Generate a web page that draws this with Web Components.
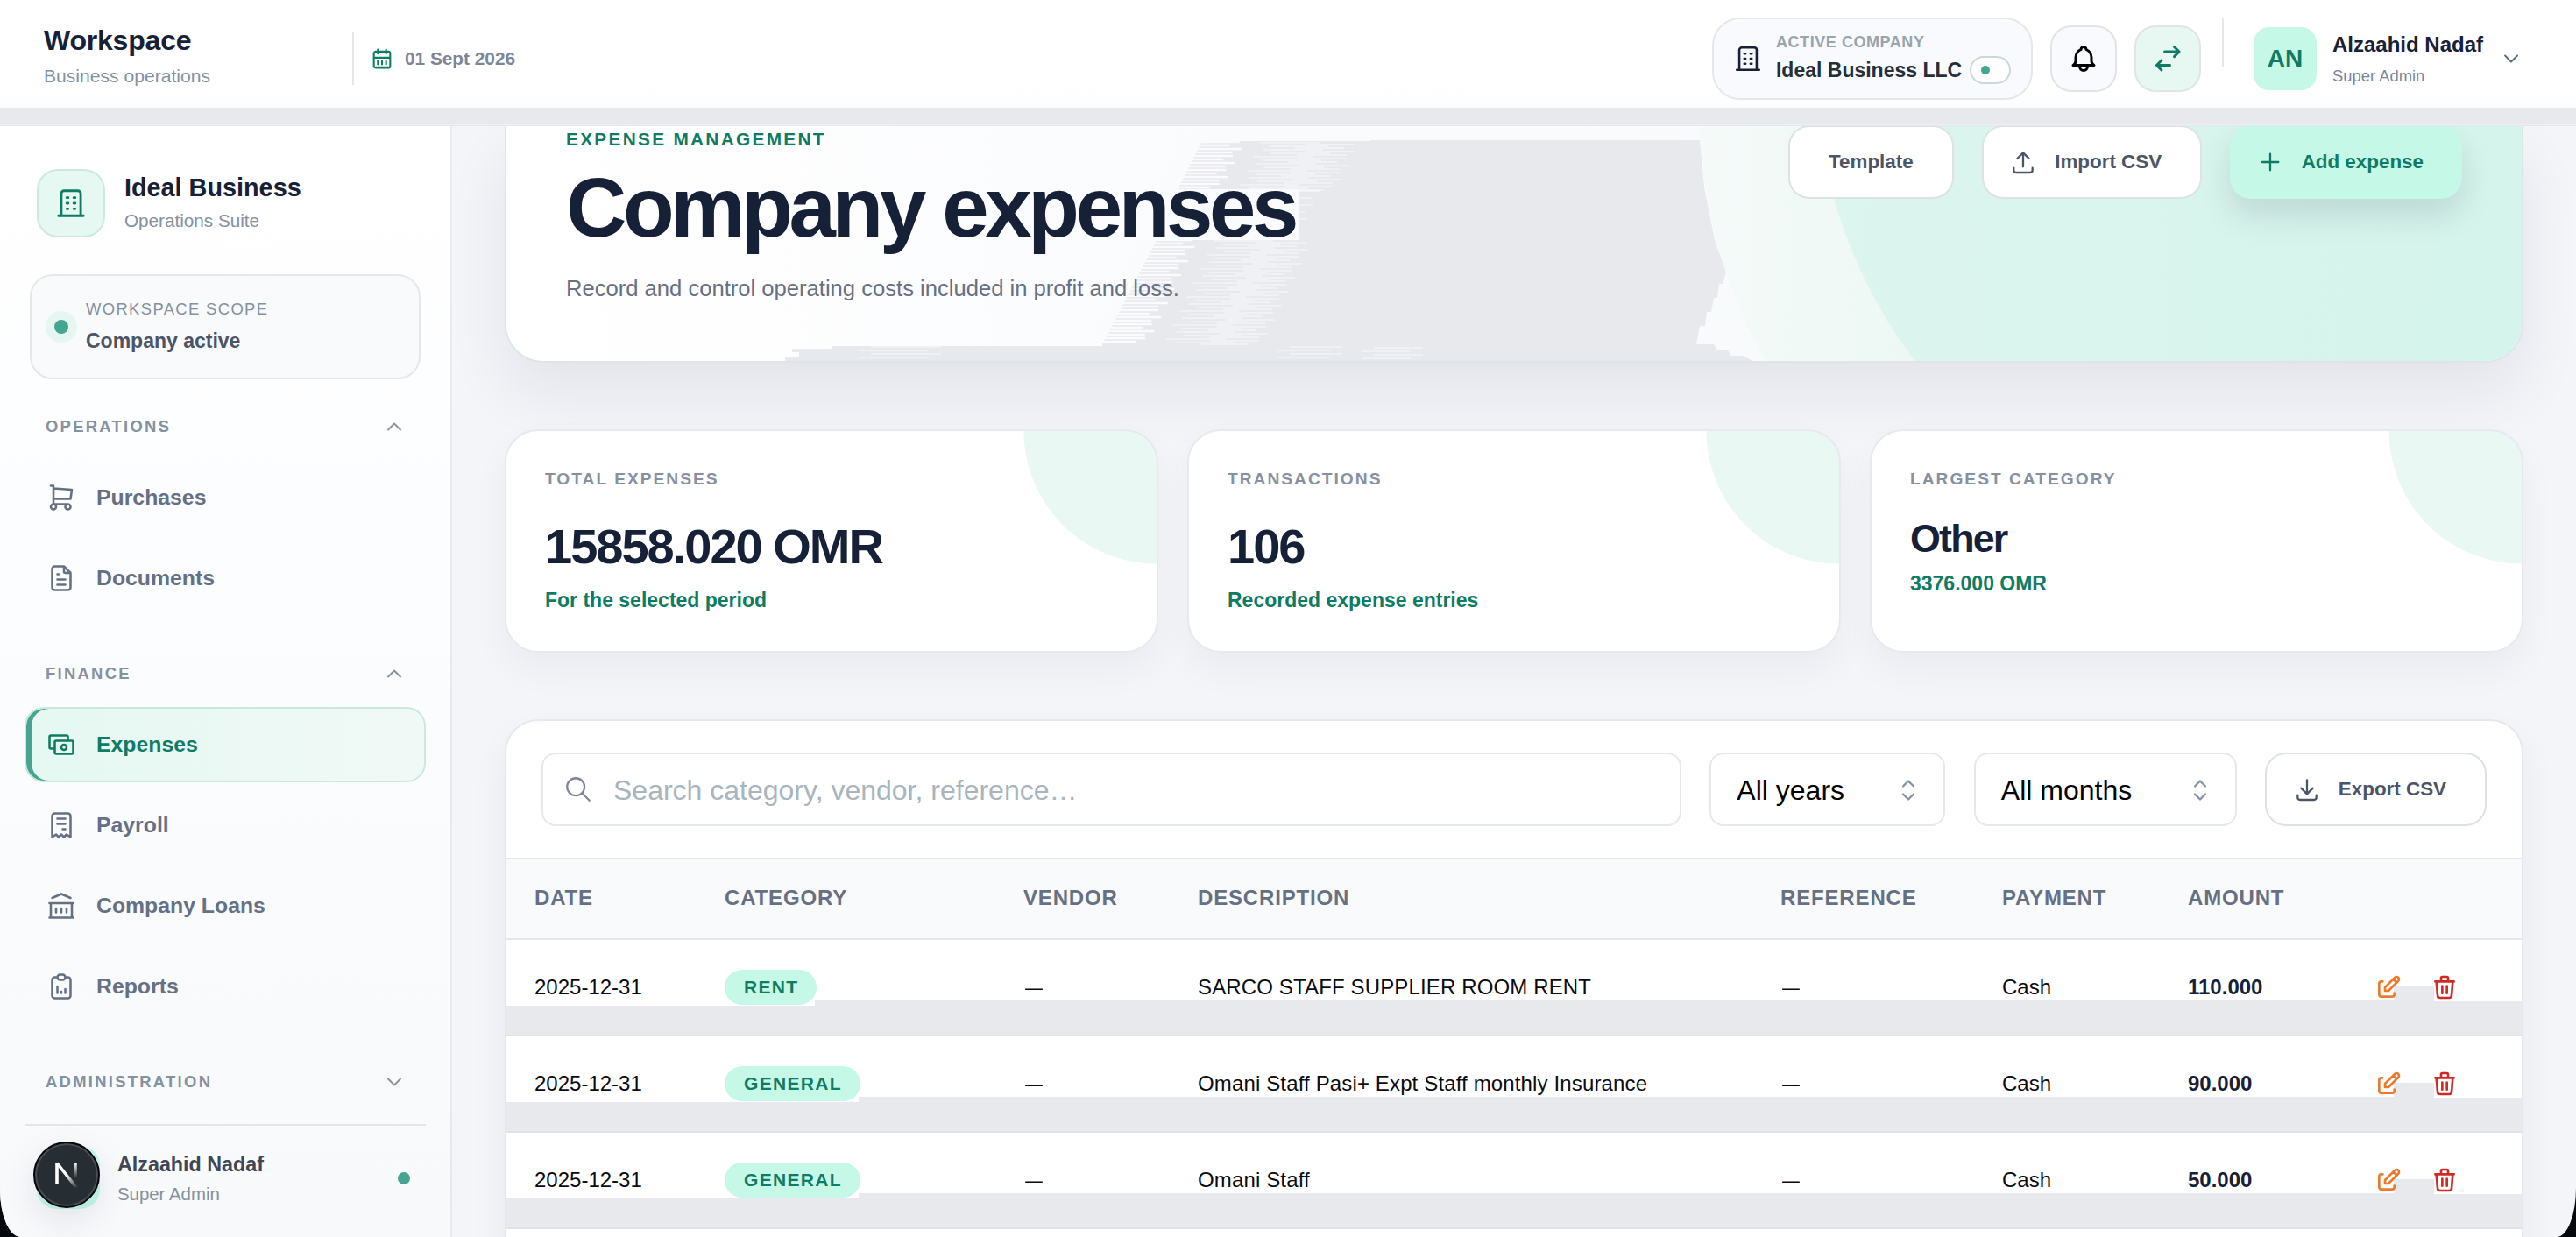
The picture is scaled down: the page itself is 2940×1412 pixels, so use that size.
<!DOCTYPE html>
<html lang="en">
<head>
<meta charset="utf-8">
<title>Company expenses</title>
<style>
  html, body {
    margin: 0;
    height: 100%;
    background: #05080c;
    overflow: hidden;
  }

  body {
    font-family: "Liberation Sans", Arial, sans-serif;
    color: #162037;
  }
</style>
</head>
<body>
<expense-app></expense-app>

<script>
const icons = {
  building: '<path d="M3 21h18M9 8h1M9 12h1M9 16h1M14 8h1M14 12h1M14 16h1M5 21v-16a2 2 0 0 1 2 -2h10a2 2 0 0 1 2 2v16"/>',
  calendar: '<path d="M4 7a2 2 0 0 1 2 -2h12a2 2 0 0 1 2 2v12a2 2 0 0 1 -2 2h-12a2 2 0 0 1 -2 -2zM16 3v4M8 3v4M4 11h16M8 14.5v3M12 14.5v3M16 14.5v3M6 20.5h12"/>',
  bell: '<path d="M10 5a2 2 0 1 1 4 0a7 7 0 0 1 4 6v3a4 4 0 0 0 2 3h-16a4 4 0 0 0 2 -3v-3a7 7 0 0 1 4 -6M9 17v1a3 3 0 0 0 6 0v-1"/>',
  swap: '<path d="M9.7 6.7h11M17 3l3.7 3.7l-3.7 3.7M13.7 17h-10M7.3 13.3l-3.7 3.7l3.7 3.7"/>',
  down: '<path d="M6 9l6 6l6 -6"/>',
  up: '<path d="M6 15l6 -6l6 6"/>',
  selector: '<path d="M8 9l4 -4l4 4M16 15l-4 4l-4 -4"/>',
  cart: '<path d="M4 19a2 2 0 1 0 4 0a2 2 0 1 0 -4 0M15 19a2 2 0 1 0 4 0a2 2 0 1 0 -4 0M17 17h-11v-14h-2M6 5l14 1l-1 7h-13"/>',
  file: '<path d="M14 3v4a1 1 0 0 0 1 1h4M17 21h-10a2 2 0 0 1 -2 -2v-14a2 2 0 0 1 2 -2h7l5 5v11a2 2 0 0 1 -2 2M9 9h1M9 13h6M9 17h6"/>',
  cash: '<path d="M7 15h-3a1 1 0 0 1 -1 -1v-8a1 1 0 0 1 1 -1h12a1 1 0 0 1 1 1v3M7 10a1 1 0 0 1 1 -1h12a1 1 0 0 1 1 1v8a1 1 0 0 1 -1 1h-12a1 1 0 0 1 -1 -1zM12 14a2 2 0 1 0 4 0a2 2 0 0 0 -4 0"/>',
  receipt: '<path d="M5 21v-16a2 2 0 0 1 2 -2h10a2 2 0 0 1 2 2v16l-3 -2l-2 2l-2 -2l-2 2l-2 -2l-3 2M9 7h6M9 11h6M13 15h2"/>',
  bank: '<path d="M3 21h18M3 10h18M5 6l7 -3l7 3M4 10v11M20 10v11M8 14v3M12 14v3M16 14v3"/>',
  report: '<path d="M9 5h-2a2 2 0 0 0 -2 2v12a2 2 0 0 0 2 2h10a2 2 0 0 0 2 -2v-12a2 2 0 0 0 -2 -2h-2M9 5a2 2 0 0 1 2 -2h2a2 2 0 0 1 2 2a2 2 0 0 1 -2 2h-2a2 2 0 0 1 -2 -2zM9 17v-5M12 17v-1M15 17v-3"/>',
  upload: '<path d="M4 17v2a2 2 0 0 0 2 2h12a2 2 0 0 0 2 -2v-2M7 9l5 -5l5 5M12 4v12"/>',
  download: '<path d="M4 17v2a2 2 0 0 0 2 2h12a2 2 0 0 0 2 -2v-2M7 11l5 5l5 -5M12 4v12"/>',
  plus: '<path d="M12 5v14M5 12h14"/>',
  search: '<path d="M3 10a7 7 0 1 0 14 0a7 7 0 1 0 -14 0M21 21l-6 -6"/>',
  edit: '<path d="M7 7h-1a2 2 0 0 0 -2 2v9a2 2 0 0 0 2 2h9a2 2 0 0 0 2 -2v-1M20.385 6.585a2.1 2.1 0 0 0 -2.97 -2.97l-8.415 8.385v3h3l8.385 -8.415zM16 5l3 3"/>',
  trash: '<path d="M4 7h16M10 11v6M14 11v6M5 7l1 12a2 2 0 0 0 2 2h8a2 2 0 0 0 2 -2l1 -12M9 7v-3a1 1 0 0 1 1 -1h4a1 1 0 0 1 1 1v3"/>',
};

class AppIcon extends HTMLElement {
  connectedCallback() {
    const size = this.getAttribute('size') || 36;
    const stroke = this.getAttribute('stroke') || 1.7;
    this.attachShadow({ mode: 'open' }).innerHTML = `
      <style>
        :host { display: block; flex: none; width: ${size}px; height: ${size}px; }
        svg { display: block; fill: none; stroke: currentColor; stroke-linecap: round; stroke-linejoin: round; }
      </style>
      <svg width="${size}" height="${size}" viewBox="0 0 24 24" stroke-width="${stroke}">${icons[this.getAttribute('name')]}</svg>
    `;
  }
}

class UiButton extends HTMLElement {
  connectedCallback() {
    const icon = this.getAttribute('icon');
    this.attachShadow({ mode: 'open' }).innerHTML = `
      <style>
        :host {
          display: flex;
          box-sizing: border-box;
          flex: none;
          align-items: center;
          gap: 20px;
          height: 84px;
          padding: 0 44px 0 ${icon ? 29.5 : 44}px;
          border: 2px solid #dde2e5;
          border-radius: 24px;
          background: #fff;
          color: #4b5567;
          font-size: 22.4px;
          font-weight: 700;
          line-height: 30px;
          white-space: nowrap;
        }
        :host([primary]) {
          border: 0;
          background: #c6f8e8;
          color: #0f7b63;
          box-shadow: 0 18px 36px rgba(22, 32, 55, .13);
        }
      </style>
      ${icon ? `<app-icon name="${icon}" size="32" stroke="1.7"></app-icon>` : ''}
      <span><slot></slot></span>
    `;
  }
}

class AppHeader extends HTMLElement {
  connectedCallback() {
    this.attachShadow({ mode: 'open' }).innerHTML = `
      <style>
        :host {
          display: flex;
          box-sizing: border-box;
          flex: none;
          align-items: center;
          height: 144px;
          padding: 0 60px 10px 50px;
          background: linear-gradient(#fff 0 100px, #fcfdff 123px, #e8e9ed 123px 142px, #eff0f3 142px 143px, #e4e6ea 143px);
          white-space: nowrap;
        }
        .title { width: 352px; margin-top: -2px; }
        .title b { display: block; font-size: 32px; line-height: 40px; letter-spacing: -.2px; }
        .title span { display: block; font-size: 21.1px; line-height: 41px; color: #8591a3; }
        .date {
          display: flex;
          align-items: center;
          gap: 12px;
          height: 60px;
          padding-left: 18px;
          border-left: 2px solid #e5e7eb;
          color: #7b8799;
          font-size: 20.8px;
          font-weight: 700;
        }
        .date app-icon { color: #0f7b63; }
        .right { display: flex; align-items: center; margin-left: auto; }
        .company {
          display: flex;
          box-sizing: border-box;
          align-items: center;
          gap: 15px;
          width: 366px;
          height: 94px;
          padding: 0 0 5px 22px;
          border: 2px solid #e5e7eb;
          border-radius: 32px;
          background: #f9fafd;
        }
        .company app-icon { margin-top: 4px; }
        .company small { display: block; font-size: 18px; line-height: 31px; font-weight: 700; letter-spacing: .56px; color: #98a4ae; }
        .company div div { display: flex; align-items: center; gap: 9px; font-size: 23px; font-weight: 700; line-height: 32px; color: #262f38; }
        .toggle {
          display: flex;
          box-sizing: border-box;
          align-items: center;
          width: 47px;
          height: 32px;
          padding-left: 11px;
          border: 2px solid #cbd6d8;
          border-radius: 16px;
          background: #fff;
        }
        .toggle::before { content: ""; width: 10px; height: 10px; border-radius: 50%; background: #45a58e; }
        .square {
          display: grid;
          box-sizing: border-box;
          place-items: center;
          width: 76px;
          height: 76px;
          margin-left: 20px;
          border: 2px solid #e0e4e8;
          border-radius: 24px;
          background: #f9fafd;
          color: #000;
        }
        .square.mint { background: #e7f8f2; color: #0f7b63; }
        .rule { width: 2px; height: 56px; margin: -38px 34px 0 24px; background: #e5e7eb; }
        .avatar {
          display: grid;
          place-items: center;
          width: 72px;
          height: 72px;
          border-radius: 18px;
          background: #c6f8e8;
          color: #0f7b63;
          font-size: 28px;
          font-weight: 700;
        }
        .user { margin: 2px 18px 0 18px; }
        .user b { display: block; font-size: 24px; line-height: 37px; }
        .user span { display: block; font-size: 18.4px; line-height: 36px; color: #7b8799; }
      </style>
      <div class="title"><b>Workspace</b><span>Business operations</span></div>
      <div class="date"><app-icon name="calendar" size="28" stroke="1.8"></app-icon><span>01 Sept 2026</span></div>
      <div class="right">
        <div class="company">
          <app-icon name="building" size="34" stroke="1.8"></app-icon>
          <div><small>ACTIVE COMPANY</small><div><span>Ideal Business LLC</span><span class="toggle"></span></div></div>
        </div>
        <div class="square"><app-icon name="bell" stroke="2"></app-icon></div>
        <div class="square mint"><app-icon name="swap" stroke="2"></app-icon></div>
        <div class="rule"></div>
        <div class="avatar">AN</div>
        <div class="user"><b>Alzaahid Nadaf</b><span>Super Admin</span></div>
        <app-icon name="down" size="28" stroke="1.6" style="color:#5c6b7a"></app-icon>
      </div>
    `;
  }
}

class NavGroup extends HTMLElement {
  connectedCallback() {
    const closed = this.hasAttribute('closed');
    this.attachShadow({ mode: 'open' }).innerHTML = `
      <style>
        :host { display: block; }
        header {
          display: flex;
          align-items: center;
          justify-content: space-between;
          height: 50px;
          padding: 0 22px 0 24px;
          color: #8591a0;
          font-size: 18.4px;
          font-weight: 700;
          letter-spacing: 2.3px;
        }
        .items { display: flex; flex-direction: column; gap: 6px; padding-top: 13px; }
      </style>
      <header><span>${this.getAttribute('label')}</span><app-icon name="${closed ? 'down' : 'up'}" size="28" stroke="1.6"></app-icon></header>
      ${closed ? '' : '<div class="items"><slot></slot></div>'}
    `;
  }
}

class NavItem extends HTMLElement {
  connectedCallback() {
    this.attachShadow({ mode: 'open' }).innerHTML = `
      <style>
        :host {
          display: flex;
          box-sizing: border-box;
          align-items: center;
          gap: 22px;
          height: 86px;
          padding-left: 22px;
          border: 2px solid transparent;
          border-radius: 22px;
          color: #667085;
          font-size: 24.8px;
          font-weight: 700;
        }
        :host([active]) {
          border-color: #cbe8df;
          background: linear-gradient(90deg, #e5f8f2, #f1f9f6);
          box-shadow: inset 6px 0 0 #45a58e;
          color: #0f7b63;
        }
      </style>
      <app-icon name="${this.getAttribute('icon')}" stroke="1.7"></app-icon>
      <slot></slot>
    `;
  }
}

class SideBar extends HTMLElement {
  connectedCallback() {
    this.attachShadow({ mode: 'open' }).innerHTML = `
      <style>
        :host {
          display: flex;
          box-sizing: border-box;
          flex: none;
          flex-direction: column;
          width: 516px;
          padding: 48px 28px 0;
          border-right: 2px solid #e8eaee;
          background: linear-gradient(#fff, #fcfdff 40%, #f8f9fb);
          white-space: nowrap;
        }
        .brand { display: flex; align-items: center; gap: 22px; padding-left: 14px; }
        .brand div + div { padding-top: 4px; }
        .logo {
          display: grid;
          box-sizing: border-box;
          place-items: center;
          width: 78px;
          height: 78px;
          border: 2px solid #cbe9de;
          border-radius: 24px;
          background: #e5f8f1;
          color: #0f7b63;
        }
        .brand b { display: block; font-size: 28.8px; line-height: 37px; }
        .brand span { display: block; font-size: 20.7px; line-height: 38px; color: #8591a0; }
        .scope {
          display: flex;
          box-sizing: border-box;
          align-items: center;
          gap: 15px;
          height: 120px;
          margin: 42px 6px 29px;
          padding-left: 21px;
          border: 2px solid #e5e8eb;
          border-radius: 26px;
          background: #f9fafc;
        }
        .scope div { margin-top: -3px; }
        .scope i { width: 16px; height: 16px; margin: 0 5px; border-radius: 50%; background: #45a58e; box-shadow: 0 0 0 10px #e6f6f0; }
        .scope span { display: block; font-size: 18.4px; line-height: 36px; letter-spacing: 1.38px; color: #8591a0; }
        .scope b { display: block; font-size: 23px; line-height: 37px; color: #4b5567; }
        nav { display: flex; flex-direction: column; gap: 41px; }
        .account { display: flex; box-sizing: border-box; align-items: center; height: 119px; margin-top: 23px; padding: 0 18px 0 14px; border-top: 2px solid #e3e6e9; }
        .avatar { position: relative; width: 72px; height: 72px; margin-right: 20px; border-radius: 22px; background: #c6f8e8; }
        /* dev-tools badge floating over the avatar */
        .badge {
          position: absolute;
          left: -4px;
          top: -5px;
          display: grid;
          box-sizing: border-box;
          place-items: center;
          width: 76px;
          height: 76px;
          border: 2px solid #05070a;
          border-radius: 50%;
          background: #262d33;
          box-shadow: inset 0 0 0 2px #4a4d59, 0 14px 38px rgba(22, 32, 55, .1);
        }
        .name { padding-top: 7px; }
        .account b { display: block; font-size: 23.3px; line-height: 33px; color: #3f4757; }
        .account span { display: block; font-size: 20.4px; line-height: 35px; color: #8591a0; }
        .online { width: 14px; height: 14px; margin: 2px 0 0 auto; border-radius: 50%; background: #45a58e; }
      </style>
      <div class="brand">
        <div class="logo"><app-icon name="building" size="38" stroke="1.8"></app-icon></div>
        <div><b>Ideal Business</b><span>Operations Suite</span></div>
      </div>
      <div class="scope"><i></i><div><span>WORKSPACE SCOPE</span><b>Company active</b></div></div>
      <nav>
        <nav-group label="OPERATIONS">
          <nav-item icon="cart">Purchases</nav-item>
          <nav-item icon="file">Documents</nav-item>
        </nav-group>
        <nav-group label="FINANCE">
          <nav-item icon="cash" active>Expenses</nav-item>
          <nav-item icon="receipt">Payroll</nav-item>
          <nav-item icon="bank">Company Loans</nav-item>
          <nav-item icon="report">Reports</nav-item>
        </nav-group>
        <nav-group label="ADMINISTRATION" closed></nav-group>
      </nav>
      <div class="account">
        <div class="avatar">
          <div class="badge">
            <svg width="28" height="30" viewBox="0 0 28 30" fill="none" stroke-width="3.6">
              <defs>
                <linearGradient id="slash" gradientUnits="userSpaceOnUse" x1="14" y1="15" x2="26" y2="30">
                  <stop offset="0" stop-color="#fff"/><stop offset="1" stop-color="#fff" stop-opacity="0"/>
                </linearGradient>
                <linearGradient id="bar" gradientUnits="userSpaceOnUse" x1="24" y1="1" x2="24" y2="19">
                  <stop offset="0" stop-color="#fff"/><stop offset="1" stop-color="#fff" stop-opacity="0"/>
                </linearGradient>
              </defs>
              <line x1="3" y1="1" x2="3" y2="25" stroke="#fff"/>
              <line x1="3" y1="1.5" x2="25.5" y2="30" stroke="url(#slash)"/>
              <line x1="24" y1="1" x2="24.01" y2="19" stroke="url(#bar)"/>
            </svg>
          </div>
        </div>
        <div class="name"><b>Alzaahid Nadaf</b><span>Super Admin</span></div>
        <div class="online"></div>
      </div>
    `;
  }
}

class PageHero extends HTMLElement {
  // pale dashes that break up the left side of the grey plane
  dashes() {
    let thick = '';
    let thin = '';
    for (let y = 18; y < 248; y += 4) {
      const left = 794 - (y - 16) * .48;
      const odd = y % 8 === 2;
      const drift = (y % 16) * .8;
      if (y > 70 && y < 130) {
        if (odd) thin += `M905 ${y}h${Math.round(left + 130 - 880 + drift)}`;
        continue;
      }
      thick += `M${left - 20} ${y}h${(odd ? 62 : 50) + drift}`;
      thin += `M${left + (odd ? 66 : 74) + drift} ${y + 1}h68`;
      thin += `M${left + (odd ? 116 : 104) + drift} ${y + 3}h56`;
    }
    for (let y = 252; y < 268; y += 4) {
      const shift = y % 8 ? 14 : 0;
      thin += `M${402 + shift} ${y}h80M${880 + shift} ${y}h60M${976 + shift} ${y + 1}h56`;
    }
    return `
      <path d="${thick}" stroke="#fafbfd" stroke-width="2.4"/>
      <path d="${thin}" stroke="#f8f9fb" stroke-width="1.2"/>
    `;
  }

  connectedCallback() {
    this.attachShadow({ mode: 'open' }).innerHTML = `
      <style>
        :host {
          position: relative;
          display: flex;
          box-sizing: border-box;
          justify-content: space-between;
          height: 270px;
          padding: 0 68px 0 68px;
          border: 2px solid #dfe5e7;
          border-top: 0;
          border-radius: 0 0 44px 44px;
          background: #fff;
          box-shadow: 0 36px 70px rgba(22, 32, 55, .075);
          white-space: nowrap;
        }
        .backdrop { position: absolute; inset: 0; border-radius: 0 0 42px 42px; overflow: hidden; }
        svg { display: block; }
        .copy, .actions { position: relative; }
        .eyebrow { padding-top: 1px; font-size: 20.8px; font-weight: 700; line-height: 28px; letter-spacing: 2.3px; color: #0f7b63; }
        h1 { margin: 10px 0 0; font-size: 96px; line-height: 107px; letter-spacing: -4.35px; color: #162037; }
        p { margin: 22px 0 0; font-size: 25.6px; line-height: 34px; color: #667085; }
        .actions { display: flex; align-items: flex-start; gap: 32px; margin-top: -1px; }
      </style>
      <div class="backdrop">
        <svg width="2300" height="268" viewBox="0 0 2300 268">
          <defs>
            <linearGradient id="wash"><stop offset="0" stop-color="#fff"/><stop offset=".38" stop-color="#fafbfd"/><stop offset="1" stop-color="#f5faf9"/></linearGradient>
            <linearGradient id="ring"><stop offset="0" stop-color="#f5faf9"/><stop offset=".2" stop-color="#edf8f4"/></linearGradient>
            <linearGradient id="disc"><stop offset="0" stop-color="#dcf5ee"/><stop offset="1" stop-color="#d2f4ea"/></linearGradient>
          </defs>
          <rect width="2300" height="268" fill="url(#wash)"/>
          <circle cx="1944" cy="-18" r="582" fill="url(#ring)"/>
          <path fill="#e8e9ed" d="M794 17H986V16H1362L1367 70L1379 130L1392 167L1388 180H1384L1382 196H1378L1375 212H1370L1368 228H1362L1358 249H1378L1382 256H1394L1398 262H1412L1422 268H318V264H334V258H326V254H372V251H680V249L742 130H905L905 72H766Z"/>
          ${this.dashes()}
          <circle cx="2062" cy="-74" r="569" fill="url(#disc)"/>
        </svg>
      </div>
      <div class="copy">
        <div class="eyebrow">EXPENSE MANAGEMENT</div>
        <h1>Company expenses</h1>
        <p>Record and control operating costs included in profit and loss.</p>
      </div>
      <div class="actions"><slot></slot></div>
    `;
  }
}

class StatCard extends HTMLElement {
  connectedCallback() {
    const small = this.hasAttribute('compact');
    this.attachShadow({ mode: 'open' }).innerHTML = `
      <style>
        :host {
          position: relative;
          display: block;
          box-sizing: border-box;
          flex: 1;
          height: 255px;
          padding: 38px 44px;
          border: 2px solid #e6e9ed;
          border-radius: 38px;
          background: radial-gradient(circle at 100% 0, #e9f8f3 151px, #fff 152px);
          box-shadow: 0 20px 44px rgba(22, 32, 55, .045);
          white-space: nowrap;
        }
        .label { font-size: 19.2px; font-weight: 700; line-height: 34px; letter-spacing: 2px; color: #8591a3; }
        .value {
          margin-top: ${small ? 22 : 27}px;
          font-size: ${small ? 44.8 : 56}px;
          font-weight: 700;
          line-height: ${small ? 56 : 66}px;
          letter-spacing: ${small ? -1.8 : -2}px;
        }
        .note { margin-top: ${small ? 8 : 12}px; font-size: 23px; font-weight: 700; line-height: 32px; color: #0f7b63; }
      </style>
      <div class="label">${this.getAttribute('label')}</div>
      <div class="value">${this.getAttribute('value')}</div>
      <div class="note"><slot></slot></div>
    `;
  }
}

class SelectBox extends HTMLElement {
  connectedCallback() {
    this.attachShadow({ mode: 'open' }).innerHTML = `
      <style>
        :host {
          display: flex;
          box-sizing: border-box;
          flex: none;
          align-items: center;
          justify-content: space-between;
          height: 84px;
          padding: 2px 22px 0 29px;
          border: 2px solid #e5e8ec;
          border-radius: 16px;
          color: #000;
          font-size: 32px;
        }
        app-icon { color: #8591a0; }
      </style>
      <slot></slot><app-icon name="selector" stroke="1.5"></app-icon>
    `;
  }
}

class ExpenseRow extends HTMLElement {
  connectedCallback() {
    const [date, category, vendor, description, reference, payment, amount] = this.getAttribute('cells').split('|');
    const step = category === 'RENT' ? 352 : 402;
    this.attachShadow({ mode: 'open' }).innerHTML = `
      <style>
        :host {
          --band: linear-gradient(#e8e9ed, #e8e9ed);
          display: grid;
          box-sizing: border-box;
          grid-template-columns: 217px 341px 199px 665px 253px 212px 213px auto;
          align-items: center;
          height: 110px;
          padding: 0 0 1px 32px;
          border-bottom: 2px solid #dde3e6;
          background:
            var(--band) 0 75px / ${step}px 40px no-repeat,
            var(--band) ${step}px 69px / ${2154 - step}px 40px no-repeat,
            var(--band) 2154px 53px / 46px 60px no-repeat,
            var(--band) 2154px 70px / 160px 40px no-repeat,
            #fff;
          color: #0b0b0f;
          font-size: 24px;
          white-space: nowrap;
        }
        .badge {
          display: inline-block;
          box-sizing: border-box;
          height: 40px;
          padding: 0 21px 0 22px;
          border-radius: 20px;
          background: #c6f8e8;
          color: #0f7b63;
          font-size: 21px;
          font-weight: 700;
          line-height: 39px;
          letter-spacing: 1.3px;
        }
        b { color: #162037; }
        .description { letter-spacing: .14px; }
        .dash { display: inline-block; transform: scaleX(.83); }
        .tools { display: flex; gap: 32px; }
        .edit { color: #ea7a2c; }
        .trash { color: #cf2a26; }
      </style>
      <span>${date}</span>
      <span><span class="badge">${category}</span></span>
      <span><span class="dash">${vendor}</span></span>
      <span class="description">${description}</span>
      <span><span class="dash">${reference}</span></span>
      <span>${payment}</span>
      <b>${amount}</b>
      <div class="tools">
        <app-icon class="edit" name="edit" size="32" stroke="2"></app-icon>
        <app-icon class="trash" name="trash" size="32" stroke="2"></app-icon>
      </div>
    `;
  }
}

class ExpensePanel extends HTMLElement {
  connectedCallback() {
    this.attachShadow({ mode: 'open' }).innerHTML = `
      <style>
        :host {
          display: block;
          box-sizing: border-box;
          flex: none;
          height: 700px;
          border: 2px solid #e5e8ec;
          border-radius: 38px;
          background: #fff;
          box-shadow: 0 20px 44px rgba(22, 32, 55, .05);
          overflow: hidden;
          white-space: nowrap;
        }
        .toolbar { display: flex; gap: 32.5px; padding: 36px 40px 36px 40px; border-bottom: 2px solid #e3e6ea; }
        .search {
          display: flex;
          box-sizing: border-box;
          flex: 1;
          align-items: center;
          gap: 23px;
          height: 84px;
          padding: 2px 0 0 23px;
          border: 2px solid #e5e8ec;
          border-radius: 16px;
          color: #a9b5bd;
          font-size: 32px;
        }
        .search app-icon { margin-top: -3px; color: #7b8799; }
        .head {
          display: grid;
          box-sizing: border-box;
          grid-template-columns: 217px 341px 199px 665px 253px 212px 217px auto;
          align-items: center;
          height: 92px;
          padding: 0 0 3px 32px;
          border-bottom: 2px solid #e3e6ea;
          background: #f9fafc;
          color: #667085;
          font-size: 24px;
          font-weight: 700;
          letter-spacing: .84px;
        }
      </style>
      <div class="toolbar">
        <div class="search"><app-icon name="search" size="34" stroke="1.6"></app-icon><span>Search category, vendor, reference…</span></div>
        <select-box style="width:269px">All years</select-box>
        <select-box style="width:300px">All months</select-box>
        <ui-button icon="download">Export CSV</ui-button>
      </div>
      <div class="head">
        <span>DATE</span><span>CATEGORY</span><span>VENDOR</span><span>DESCRIPTION</span>
        <span>REFERENCE</span><span>PAYMENT</span><span>AMOUNT</span>
      </div>
      <slot></slot>
    `;
  }
}

class ExpenseApp extends HTMLElement {
  connectedCallback() {
    this.attachShadow({ mode: 'open' }).innerHTML = `
      <style>
        :host {
          display: flex;
          flex-direction: column;
          height: 100vh;
          border-radius: 0 0 22px 24px / 0 0 56px 54px;
          background: #f3f5f9;
          overflow: hidden;
        }
        .body { display: flex; flex: 1; min-height: 0; overflow: hidden; }
        main { display: flex; box-sizing: border-box; flex: 1; flex-direction: column; gap: 76px; padding: 0 60px; }
        page-hero { flex: none; }
        .stats { display: flex; flex: none; gap: 33px; }
      </style>
      <app-header></app-header>
      <div class="body">
        <side-bar></side-bar>
        <main>
          <page-hero>
            <ui-button>Template</ui-button>
            <ui-button icon="upload">Import CSV</ui-button>
            <ui-button icon="plus" primary>Add expense</ui-button>
          </page-hero>
          <div class="stats">
            <stat-card label="TOTAL EXPENSES" value="15858.020 OMR">For the selected period</stat-card>
            <stat-card label="TRANSACTIONS" value="106">Recorded expense entries</stat-card>
            <stat-card label="LARGEST CATEGORY" value="Other" compact>3376.000 OMR</stat-card>
          </div>
          <expense-panel>
            <expense-row cells="2025-12-31|RENT|—|SARCO STAFF SUPPLIER ROOM RENT|—|Cash|110.000"></expense-row>
            <expense-row cells="2025-12-31|GENERAL|—|Omani Staff Pasi+ Expt Staff monthly Insurance|—|Cash|90.000"></expense-row>
            <expense-row cells="2025-12-31|GENERAL|—|Omani Staff|—|Cash|50.000"></expense-row>
          </expense-panel>
        </main>
      </div>
    `;
  }
}

customElements.define('app-icon', AppIcon);
customElements.define('ui-button', UiButton);
customElements.define('app-header', AppHeader);
customElements.define('nav-item', NavItem);
customElements.define('nav-group', NavGroup);
customElements.define('side-bar', SideBar);
customElements.define('page-hero', PageHero);
customElements.define('stat-card', StatCard);
customElements.define('select-box', SelectBox);
customElements.define('expense-row', ExpenseRow);
customElements.define('expense-panel', ExpensePanel);
customElements.define('expense-app', ExpenseApp);
</script>
</body>
</html>
